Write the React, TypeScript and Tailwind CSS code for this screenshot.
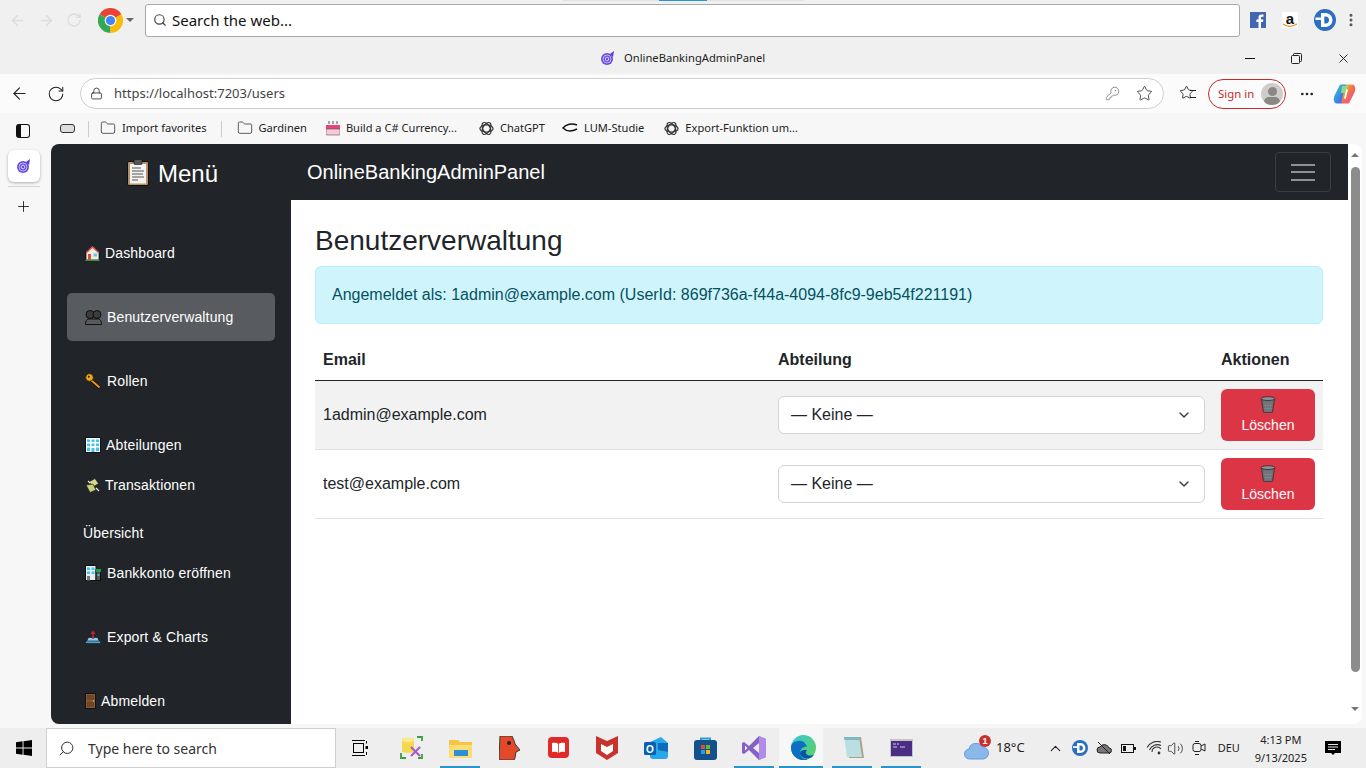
import {
  ArrowLeft, ArrowRight, RotateCw, Search, Lock, KeyRound, Star, Ellipsis, X, Plus, ChevronDown, ChevronUp,
  Folder, Volume2, EllipsisVertical,
} from 'lucide-react'

const uiFont = "font-['Noto_Sans',sans-serif]"
const pageFont = "font-['Liberation_Sans',Arial,sans-serif]"

// ===== Small drawings
function ChromeLogo() {
  return (
    <svg width="25" height="25" viewBox="0 0 24 24">
      <path d="M12 12L1.6 6A12 12 0 0 1 22.4 6Z" fill="#ea4335" />
      <path d="M12 12L1.6 6A12 12 0 0 0 12 24Z" fill="#34a853" />
      <path d="M12 12L22.4 6A12 12 0 0 1 12 24Z" fill="#fbbc04" />
      <circle cx="12" cy="12" r="5.6" fill="#fff" />
      <circle cx="12" cy="12" r="4.4" fill="#4285f4" />
    </svg>
  )
}

function SwirlIcon({ size = 16 }: { size?: number }) {
  return (
    <svg width={size} height={size} viewBox="0 0 16 16" fill="none">
      <circle cx="7" cy="9" r="6" fill="#6a4de0" />
      <path d="M10 4l4-3-1 6z" fill="#5a3ad6" />
      <circle cx="7" cy="9" r="4" stroke="#c9bdf7" strokeWidth="0.9" />
      <circle cx="7" cy="9" r="1.8" stroke="#e4defb" strokeWidth="0.9" />
    </svg>
  )
}

function DIcon({ size = 22 }: { size?: number }) {
  return (
    <svg width={size} height={size} viewBox="0 0 22 22">
      <circle cx="11" cy="11" r="11" fill="#2a6fc0" />
      <path d="M7 4h4.500a7 7 0 0 1 0 14H7V11H1.500V8.500H7z" fill="#fff" />
      <path d="M10.300 7.500h1.200a3.500 3.500 0 0 1 0 7h-1.200z" fill="#2a6fc0" />
    </svg>
  )
}

function OpenAiIcon() {
  return (
    <svg width="15" height="15" viewBox="0 0 15 15" fill="none" stroke="#333" strokeWidth="1.2">
      <ellipse cx="7.5" cy="7.5" rx="6.6" ry="3.6" />
      <ellipse cx="7.5" cy="7.5" rx="6.6" ry="3.6" transform="rotate(60 7.5 7.5)" />
      <ellipse cx="7.5" cy="7.5" rx="6.6" ry="3.6" transform="rotate(120 7.5 7.5)" />
    </svg>
  )
}

function Copilot() {
  return (
    <svg width="23" height="22" viewBox="0 0 23 22" strokeLinejoin="round">
      <defs>
        <linearGradient id="cpa" x1="0" y1="0" x2="1" y2="1">
          <stop offset="0" stopColor="#2fd0c8" />
          <stop offset="0.6" stopColor="#3f7de8" />
          <stop offset="1" stopColor="#7a55e0" />
        </linearGradient>
        <linearGradient id="cpb" x1="0" y1="0" x2="1" y2="1">
          <stop offset="0" stopColor="#f5c23a" />
          <stop offset="0.5" stopColor="#f0704c" />
          <stop offset="1" stopColor="#e84fa8" />
        </linearGradient>
      </defs>
      <path d="M8 3h5l-3 14c-.4 1.500-1 2-2 2H4C2 19 2 16 2.500 14z" fill="url(#cpa)" stroke="url(#cpa)" strokeWidth="3" />
      <path d="M15 19h-5l3-14c.4-1.500 1-2 2-2h4c2 0 2 3 1.500 5z" fill="url(#cpb)" stroke="url(#cpb)" strokeWidth="3" />
      <path d="M9 3h6l-2.500 7H8z" fill="#8fdc7c" />
      <path d="M14 7l-2 8" stroke="#fff" strokeWidth="1.800" strokeLinecap="round" />
    </svg>
  )
}

function HouseEmoji() {
  return (
    <svg width="15" height="16" viewBox="0 0 15 16">
      <path d="M7.5 1L1 7v8h13V7z" fill="#f3ece4" stroke="#000" strokeWidth="0.7" />
      <path d="M7.5 1L1 7l1 1 5.5-5 5.5 5 1-1z" fill="#d9534a" />
      <rect x="3" y="9" width="3" height="6" fill="#e2492f" />
      <rect x="8.5" y="8.5" width="3.5" height="3" fill="#5fc4ee" />
      <rect x="0.5" y="14.6" width="14" height="1.2" fill="#3fae3f" />
    </svg>
  )
}
function BustsEmoji() {
  return (
    <svg width="17" height="15" viewBox="0 0 17 15">
      <circle cx="5" cy="4.500" r="4" fill="#3c3c3c" stroke="#000" strokeWidth="0.8" />
      <circle cx="12" cy="4.500" r="4" fill="#3c3c3c" stroke="#000" strokeWidth="0.8" />
      <path d="M0.500 14.500c0-4 1.500-5.500 4-5.500h8c2.500 0 4 1.500 4 5.500z" fill="#5a5a5a" stroke="#000" strokeWidth="0.8" />
    </svg>
  )
}
function KeyEmoji() {
  return (
    <svg width="16" height="16" viewBox="0 0 16 16">
      <path d="M6 7l8.500 7.500" stroke="#000" strokeWidth="3.400" />
      <path d="M6 7l8.500 7.500" stroke="#e49b11" strokeWidth="2" />
      <circle cx="4.500" cy="4.500" r="3.800" fill="#f0a818" stroke="#3a2a05" strokeWidth="0.8" />
      <circle cx="3.800" cy="3.800" r="1" fill="#222" />
    </svg>
  )
}
function OfficeEmoji() {
  return (
    <svg width="16" height="16" viewBox="0 0 16 16">
      <rect x="0.500" y="0.500" width="15" height="15" fill="#fff" stroke="#111" />
      <g fill="#40c4f0">
        <rect x="2" y="2.500" width="3" height="2.500" />
        <rect x="6.500" y="2.500" width="3" height="2.500" />
        <rect x="11" y="2.500" width="3" height="2.500" />
        <rect x="2" y="6.500" width="3" height="2.500" />
        <rect x="6.500" y="6.500" width="3" height="2.500" />
        <rect x="11" y="6.500" width="3" height="2.500" />
        <rect x="2" y="10.500" width="3" height="3.500" />
        <rect x="6.500" y="11" width="3" height="4" />
        <rect x="11" y="10.500" width="3" height="3.500" />
      </g>
    </svg>
  )
}
function MoneyEmoji() {
  return (
    <svg width="15" height="15" viewBox="0 0 15 15">
      <path d="M4 4l6-3.500 3.500 5L8 9z" fill="#d9d98c" stroke="#222" strokeWidth="0.7" />
      <path d="M1 7l7-1 3 6-6 2.500z" fill="#c7cf75" stroke="#222" strokeWidth="0.7" />
      <path d="M3 3l2 2M11 10l3 3" stroke="#eee" strokeWidth="1.200" />
    </svg>
  )
}
function BankEmoji() {
  return (
    <svg width="16" height="16" viewBox="0 0 16 16">
      <rect x="0.500" y="0.500" width="10.500" height="15" fill="#e8eef0" stroke="#111" />
      <rect x="11" y="5" width="4.500" height="10.500" fill="#555" stroke="#111" />
      <rect x="11" y="4" width="5" height="3" fill="#18a34a" />
      <g fill="#40c4f0">
        <rect x="2" y="2.500" width="3" height="2.500" />
        <rect x="6.500" y="2.500" width="3" height="2.500" />
        <rect x="2" y="6.500" width="3" height="2.500" />
        <rect x="6.500" y="6.500" width="3" height="2.500" />
      </g>
      <rect x="2" y="11" width="3" height="4.500" fill="#777" />
      <rect x="12.500" y="9" width="2" height="2" fill="#40c4f0" />
    </svg>
  )
}
function UploadEmoji() {
  return (
    <svg width="16" height="14" viewBox="0 0 16 14">
      <path d="M0.500 13.500l3-6h9l3 6z" fill="#8fcdf0" stroke="#111" strokeWidth="0.6" />
      <rect x="0.500" y="11" width="15" height="2.500" fill="#4a9fd8" stroke="#111" strokeWidth="0.6" />
      <path d="M8 9V3" stroke="#c8222a" strokeWidth="1.500" />
      <path d="M5.500 4L8 0.500 10.500 4z" fill="#c8222a" />
    </svg>
  )
}
function DoorEmoji() {
  return (
    <svg width="11" height="16" viewBox="0 0 11 16">
      <rect x="0.500" y="0.500" width="10" height="15" fill="#8a5a34" stroke="#111" />
      <rect x="2" y="2" width="7" height="5" fill="#6e4526" />
      <rect x="2" y="8.500" width="7" height="5.500" fill="#6e4526" />
      <circle cx="8.500" cy="8" r="0.700" fill="#e5c25a" />
    </svg>
  )
}
function TrashEmoji() {
  return (
    <svg width="16" height="17" viewBox="0 0 16 17">
      <path d="M1.500 3h13l-1.800 12.500c-.1.800-.6 1.200-1.200 1.200h-7c-.6 0-1.100-.4-1.200-1.200z" fill="#6b7076" stroke="#222" strokeWidth="0.7" />
      <ellipse cx="8" cy="2.600" rx="7" ry="1.900" fill="#8b9096" stroke="#222" strokeWidth="0.7" />
      <path d="M5 6l1 9M8 6v9M11 6l-1 9M3.500 9.500h9M4 12.500h8" stroke="#8b9096" strokeWidth="0.5" />
    </svg>
  )
}
function ClipboardEmoji() {
  return (
    <svg width="22" height="27" viewBox="0 0 22 27">
      <rect x="0.500" y="2.500" width="21" height="24" rx="1.500" fill="#b98f6a" stroke="#111" />
      <rect x="3" y="5" width="16" height="19.500" fill="#f4f4f2" />
      <rect x="7" y="0.500" width="8" height="5" rx="1" fill="#555" stroke="#111" strokeWidth="0.6" />
      <path d="M5 9h9M5 12h12M5 15h11M5 18h12M5 21h6" stroke="#555" strokeWidth="1" />
    </svg>
  )
}

// ===== Taskbar drawings
function TaskView() {
  return (
    <svg width="16" height="16" viewBox="0 0 16 16" fill="none" stroke="#000">
      <rect x="1.500" y="3.500" width="10" height="9" />
      <path d="M0 0.500h13M0 15.500h13" />
      <rect x="13.500" y="6" width="2.500" height="3" fill="#000" stroke="none" />
      <path d="M14.500 1v2.500M14.500 12v3" />
    </svg>
  )
}
function DbTool() {
  return (
    <svg width="23" height="23" viewBox="0 0 23 23" fill="none">
      <path d="M17 1h5v4M1 17v5h5M22 18v4h-4" stroke="#3f9d3f" strokeWidth="1.800" />
      <path d="M2 4c0-3 12-3 12 0v11c0 2.500-12 2.500-12 0z" fill="#f4d94e" />
      <ellipse cx="8" cy="4" rx="6" ry="2.200" fill="#f9e98c" />
      <path d="M11 11l9 9M20 11l-9 9" stroke="#a65cc9" strokeWidth="2.200" />
    </svg>
  )
}
function Explorer() {
  return (
    <svg width="23" height="20" viewBox="0 0 23 20">
      <path d="M0 2h9l2 2h12v15H0z" fill="#f6c544" />
      <rect x="0" y="7" width="23" height="13" fill="#fcdc74" />
      <rect x="5" y="12" width="14" height="6" fill="#2f8fd6" />
    </svg>
  )
}
function RedHead() {
  return (
    <svg width="21" height="24" viewBox="0 0 21 24">
      <path d="M1 0h12c2 4 3 7 3 8l5 6-4 2-1 6-1 2H2L0 23z" fill="#e2492a" stroke="#3a3a3a" strokeWidth="1" />
      <circle cx="10" cy="7" r="2" fill="#222" />
    </svg>
  )
}
function RedBook() {
  return (
    <svg width="21" height="21" viewBox="0 0 21 21">
      <rect width="21" height="21" rx="4" fill="#e02a2a" />
      <path d="M10.500 7c-2-1.500-4-1.500-6.500-1v9c2.500-.5 4.500-.5 6.500 1 2-1.500 4-1.500 6.500-1V6c-2.500-.5-4.500-.5-6.500 1z" fill="#fff" />
      <path d="M10.500 7v9" stroke="#e02a2a" strokeWidth="0.800" />
    </svg>
  )
}
function McAfee() {
  return (
    <svg width="22" height="24" viewBox="0 0 22 24">
      <path d="M0 0l11 5 11-5v17l-11 7-11-7z" fill="#c8332e" />
      <path d="M5 8l6 3 6-3v7l-6 4-6-4z" fill="#fff" />
    </svg>
  )
}
function Outlook() {
  return (
    <svg width="24" height="22" viewBox="0 0 24 22">
      <path d="M6 5l11-5 7 6v13a3 3 0 0 1-3 3H9a3 3 0 0 1-3-3z" fill="#28a8ea" />
      <path d="M14 6l10 0v9l-10-2z" fill="#0f6cbd" />
      <rect x="0" y="5" width="12" height="13" rx="1.500" fill="#0a5fb0" />
      <text x="6" y="15.500" textAnchor="middle" fill="#fff" fontSize="10" fontWeight="700" fontFamily="Liberation Sans">O</text>
    </svg>
  )
}
function StoreBag() {
  return (
    <svg width="23" height="24" viewBox="0 0 23 24" fill="none">
      <path d="M7 5V2.500h9V5" stroke="#2a9fd6" strokeWidth="2" />
      <rect y="4" width="23" height="20" rx="3" fill="#14508c" />
      <rect x="7" y="9" width="4" height="4" fill="#e8492a" />
      <rect x="12" y="9" width="4" height="4" fill="#6ab82e" />
      <rect x="7" y="14" width="4" height="4" fill="#1f9fe8" />
      <rect x="12" y="14" width="4" height="4" fill="#f7b51a" />
    </svg>
  )
}
function VsIcon() {
  return (
    <svg width="24" height="24" viewBox="0 0 24 24">
      <path d="M17 0l7 3v18l-7 3-10-10-5 4-2-1V7l2-1 5 4z" fill="#8661c5" />
      <path d="M17 0l7 3v18l-7 3z" fill="#b18be8" />
      <path d="M17 7l-6 5 6 5zM3 9.500v5l2.500-2.500z" fill="#ececec" />
    </svg>
  )
}
function EdgeIcon() {
  return (
    <svg width="25" height="25" viewBox="0 0 25 25">
      <defs>
        <linearGradient id="edg" x1="0" y1="0" x2="1" y2="1">
          <stop offset="0" stopColor="#36c6d8" />
          <stop offset="1" stopColor="#5fd35a" />
        </linearGradient>
      </defs>
      <circle cx="12.500" cy="12.500" r="12.500" fill="url(#edg)" />
      <path d="M0 12.500A12.500 12.500 0 0 0 18 24c-5 1-9-2-9-6 0-4 4-7 7-6-1-4-5-7-9-6C3 6 0 9 0 12.500z" fill="#0d6fc4" />
      <path d="M9 18c0 3 3 5.500 7 5.500 4 0 6-2 7-4-3 2-7 1-8-1-.5-1 0-2 1-3-3-1-7 0-7 2.500z" fill="#0a54a8" />
    </svg>
  )
}
function Notepad() {
  return (
    <svg width="23" height="24" viewBox="0 0 23 24">
      <path d="M5 1h15l3 21H8z" fill="#a9a28a" />
      <path d="M3 1h15l3 20H6z" fill="#b9dfe3" />
      <path d="M3 1h15l.5 3H3.500z" fill="#7fb8c4" />
    </svg>
  )
}
function Terminal() {
  return (
    <svg width="23" height="18" viewBox="0 0 23 18">
      <rect width="23" height="18" fill="#c5c5c5" />
      <rect x="1" y="2" width="21" height="15" fill="#4b2e83" />
      <path d="M3 5h3M7 5h2M3 8h4M10 8h5" stroke="#cfc6e8" strokeWidth="1" />
    </svg>
  )
}
function CloudBadge() {
  return (
    <div className="relative h-[24px] w-[26px]">
      <svg width="25" height="19" viewBox="0 0 25 19" className="absolute bottom-0 left-0">
        <path d="M6 18a5 5 0 0 1-1-10 7 7 0 0 1 13-2 6 6 0 0 1 1 12z" fill="#8ab8ea" stroke="#6a9ad8" />
      </svg>
      <div className={`absolute right-[-1px] top-[-1px] flex h-[12px] w-[12px] items-center justify-center rounded-full bg-[#c9302c] text-[9px] font-bold leading-none text-white ${pageFont}`}>1</div>
    </div>
  )
}

// ===== Browser chrome
function TopBar() {
  return (
    <div className="relative flex h-[37px] shrink-0 items-center bg-[#f0f0f0] pt-[3px]">
      <div className="absolute left-[563px] top-0 h-px w-[241px] bg-[#e2e2e2]" />
      <div className="absolute left-[659px] top-0 h-px w-[48px] bg-[#2a93d6]" />
      <ArrowLeft size={17} className="ml-[9px] text-[#dcdcdc]" strokeWidth={2} />
      <ArrowRight size={17} className="ml-[12px] text-[#dcdcdc]" strokeWidth={2} />
      <RotateCw size={16} className="ml-[11px] text-[#dcdcdc]" strokeWidth={2} />
      <div className="ml-[16px]"><ChromeLogo /></div>
      <div className="ml-[3px] h-0 w-0 border-x-[4px] border-t-[4px] border-x-transparent border-t-[#666]" />
      <div className="ml-[11px] flex h-[33px] w-[1095px] items-center rounded-[3px] border border-[#a8a8a8] bg-white pl-[7px]">
        <Search size={14} className="text-[#444]" strokeWidth={2} />
        <span className={`ml-[5px] text-[15px] text-[#111] ${uiFont}`}>Search the web...</span>
      </div>
      <svg width="16" height="16" viewBox="0 0 16 16" className="ml-[10px]">
        <rect width="16" height="16" fill="#4267b2" />
        <path d="M11 16V10h2l.4-2.500H11V6c0-.8.3-1.200 1.200-1.200h1.300V2.600C13 2.500 12.300 2.500 11.600 2.500 9.600 2.500 8.500 3.700 8.500 5.700v1.800H6.400V10h2.100v6z" fill="#fff" />
      </svg>
      <div className="relative ml-[16px] flex h-[16px] w-[16px] items-start justify-center bg-white">
        <span className={`text-[15px] font-bold leading-[13px] text-[#111] ${pageFont}`}>a</span>
        <svg width="16" height="5" viewBox="0 0 16 5" className="absolute bottom-0 left-0">
          <path d="M1 1c4 3 9 3 14 0" stroke="#f08c1e" strokeWidth="1.200" fill="none" />
        </svg>
      </div>
      <div className="ml-[16px]"><DIcon /></div>
      <EllipsisVertical size={16} className="ml-[7px] text-[#555]" strokeWidth={2.500} />
    </div>
  )
}

function TitleBar() {
  return (
    <div className="relative flex h-[37px] shrink-0 items-center bg-[#f0f0f0] pt-[5px]">
      <div className="ml-[600px]"><SwirlIcon /></div>
      <span className={`ml-[8px] text-[11.2px] text-[#222] ${uiFont}`}>OnlineBankingAdminPanel</span>
      <div className="ml-auto flex items-center pr-[15px]">
        <div className="h-px w-[10px] bg-[#111]" />
        <svg width="11" height="11" viewBox="0 0 11 11" fill="none" stroke="#222" className="ml-[36px]">
          <rect x="0.500" y="2.500" width="8" height="8" rx="1" />
          <path d="M2.500 2.500V1.500a1 1 0 0 1 1-1h6a1 1 0 0 1 1 1v6a1 1 0 0 1-1 1h-1" />
        </svg>
        <X size={15} className="ml-[34px] text-[#111]" strokeWidth={1.400} />
      </div>
    </div>
  )
}

function AddressBar() {
  return (
    <div className="flex h-[39px] shrink-0 items-center bg-[#fbfbfb] pb-[4px] pt-[4px]">
      <ArrowLeft size={19} className="ml-[10px] text-[#222]" strokeWidth={1.400} />
      <RotateCw size={18} className="ml-[18px] text-[#222]" strokeWidth={1.400} />
      <div className="ml-[15px] flex h-[31px] w-[1084px] items-center rounded-full border border-[#cfcfcf] bg-white pl-[9px] pr-[10px]">
        <Lock size={13} className="text-[#333]" strokeWidth={1.600} />
        <span className={`ml-[11px] pt-px text-[13px] text-[#444] ${uiFont}`}>https://localhost:7203/users</span>
        <KeyRound size={15} className="ml-auto text-[#777]" strokeWidth={1.300} />
        <Star size={17} className="ml-[16px] text-[#333]" strokeWidth={1.200} />
      </div>
      <div className="relative ml-[15px] h-[17px] w-[17px]">
        <Star size={15} className="text-[#222]" strokeWidth={1.400} />
        <div className="absolute right-0 top-[5px] h-[8px] w-[6px] border-y border-[#222]" />
      </div>
      <div className="ml-[12px] flex h-[30px] w-[78px] items-center rounded-full border-[1.500px] border-[#c42b2b] pl-[9px]">
        <span className={`text-[11.4px] text-[#c42b2b] ${uiFont}`}>Sign in</span>
        <div className="relative ml-[7px] h-[22px] w-[22px] overflow-hidden rounded-full bg-[#cfcdc9]">
          <div className="mx-auto mt-[4px] h-[9px] w-[9px] rounded-full bg-[#8a8886]" />
          <div className="mx-auto mt-[1px] h-[10px] w-[16px] rounded-full bg-[#8a8886]" />
        </div>
      </div>
      <Ellipsis size={16} className="ml-[13px] text-[#222]" />
      <div className="ml-[18px]"><Copilot /></div>
    </div>
  )
}

function Bookmark({ icon, label, className }: { icon: React.ReactNode; label: string; className: string }) {
  return (
    <div className={`flex items-center ${className}`}>
      {icon}
      <span className={`ml-[6px] whitespace-nowrap text-[11.1px] text-[#222] ${uiFont}`}>{label}</span>
    </div>
  )
}

function BookmarksBar() {
  return (
    <div className="flex h-[31px] shrink-0 items-center bg-[#f7f7f7]">
      <div className="ml-[16px] mt-[5px] h-[14px] w-[14px] rounded-[3px] border-[1.500px] border-[#111] border-l-[5px]" />
      <div className="ml-[30px] h-[9px] w-[15px] rounded-[3px] border-[1.500px] border-[#333] bg-[#ddd]" />
      <div className="ml-[13px] h-[16px] w-px bg-[#ccc]" />
      <Bookmark
        className="ml-[11px]"
        label="Import favorites"
        icon={<Folder size={16} className="text-[#333]" strokeWidth={1.200} />}
      />
      <div className="ml-[14px] h-[16px] w-px bg-[#ccc]" />
      <Bookmark
        className="ml-[15px]"
        label="Gardinen"
        icon={<Folder size={16} className="text-[#333]" strokeWidth={1.200} />}
      />
      <Bookmark
        className="ml-[19px]"
        label="Build a C# Currency..."
        icon={
          <svg width="14" height="15" viewBox="0 0 14 15">
            <path d="M3 0v3M7 0v3M11 0v3" stroke="#555" />
            <rect y="4" width="14" height="4" fill="#e8447c" />
            <rect y="8" width="14" height="6" rx="1" fill="#f7c9d9" stroke="#555" strokeWidth="0.6" />
          </svg>
        }
      />
      <Bookmark className="ml-[22px]" label="ChatGPT" icon={<OpenAiIcon />} />
      <Bookmark
        className="ml-[17px]"
        label="LUM-Studie"
        icon={
          <svg width="16" height="10" viewBox="0 0 16 10" fill="none" stroke="#111" strokeWidth="1.400">
            <path d="M15 2C10 0 4 1 1 5c3 3 8 4 14 1" />
          </svg>
        }
      />
      <Bookmark className="ml-[20px]" label="Export-Funktion um..." icon={<OpenAiIcon />} />
    </div>
  )
}

function LeftRail() {
  return (
    <div className="flex w-[51px] shrink-0 flex-col items-start bg-[#f7f7f7] pl-[8px] pt-[6px]">
      <div className="flex h-[32px] w-[32px] items-center justify-center rounded-[6px] bg-white shadow-[0_1px_3px_rgba(0,0,0,0.3)]">
        <SwirlIcon />
      </div>
      <div className="mt-[4px] h-px w-[32px] bg-[#d5d5d5]" />
      <Plus size={17} className="ml-[7px] mt-[11px] text-[#111]" strokeWidth={1.200} />
    </div>
  )
}

// ===== Page
const navRows: { icon?: React.ReactNode; label: string; className: string; iconGap?: string; active?: boolean }[] = [
  { icon: <HouseEmoji />, label: 'Dashboard', className: 'mt-[29px] h-[48px] pl-[18px]', iconGap: 'ml-[5px]' },
  { icon: <BustsEmoji />, label: 'Benutzerverwaltung', className: 'mt-4 h-[48px] pl-[18px]', iconGap: 'ml-[5px]', active: true },
  { icon: <KeyEmoji />, label: 'Rollen', className: 'mt-4 h-[48px] pl-[18px]', iconGap: 'ml-[6px]' },
  { icon: <OfficeEmoji />, label: 'Abteilungen', className: 'mt-4 h-[48px] pl-[18px]', iconGap: 'ml-[5px]' },
  { icon: <MoneyEmoji />, label: 'Transaktionen', className: 'h-[32px] pl-[18px]', iconGap: 'ml-[5px]' },
  { label: 'Übersicht', className: 'mt-4 h-[32px] pl-[16px]' },
  { icon: <BankEmoji />, label: 'Bankkonto eröffnen', className: 'h-[48px] pl-[18px]', iconGap: 'ml-[6px]' },
  { icon: <UploadEmoji />, label: 'Export & Charts', className: 'mt-4 h-[48px] pl-[18px]', iconGap: 'ml-[6px]' },
  { icon: <DoorEmoji />, label: 'Abmelden', className: 'mt-4 h-[48px] pl-[18px]', iconGap: 'ml-[5px]' },
]

function Sidebar() {
  return (
    <div className={`flex h-full w-[240px] shrink-0 flex-col overflow-hidden bg-[#212529] text-white ${pageFont}`}>
      <div className="flex h-[56px] shrink-0 items-center pl-[76px]">
        <ClipboardEmoji />
        <span className="ml-[9px] pt-[3px] text-[24px]">Menü</span>
      </div>
      <div className="flex flex-col px-[16px]">
        {navRows.map((r) => (
          <div
            key={r.label}
            className={`flex shrink-0 items-center rounded-[5px] text-[14px] tracking-[0.15px] ${r.className} ${r.active ? 'bg-[#585c60]' : ''}`}
          >
            {r.icon}
            <span className={r.iconGap}>{r.label}</span>
          </div>
        ))}
      </div>
    </div>
  )
}

function UserRow({ email, striped }: { email: string; striped?: boolean }) {
  return (
    <tr className={`h-[69px] border-b border-[#dee2e6] ${striped ? 'bg-[#f2f2f2]' : 'bg-white'}`}>
      <td className="px-2">{email}</td>
      <td className="px-2">
        <div className="flex h-[38px] items-center justify-between rounded-[6px] border border-[#ced4da] bg-white pl-3 pr-[12px]">
          <span>— Keine —</span>
          <ChevronDown size={16} className="text-[#343a40]" strokeWidth={2} />
        </div>
      </td>
      <td className="px-2">
        <button className="flex h-[52px] w-[94px] flex-col items-center justify-center rounded-[6px] bg-[#dc3545] text-[14px] text-white">
          <TrashEmoji />
          <span className="mt-[3px] leading-[18px]">Löschen</span>
        </button>
      </td>
    </tr>
  )
}

function MainPanel() {
  return (
    <div className={`flex h-full min-w-0 flex-1 flex-col bg-white text-[#212529] ${pageFont}`}>
      <div className="flex h-[56px] shrink-0 items-center justify-between bg-[#212529] pl-[16px] pr-[17px] text-white">
        <span className="text-[20px]">OnlineBankingAdminPanel</span>
        <div className="flex h-[40px] w-[56px] flex-col items-center justify-center gap-[5.500px] rounded-[4px] border border-[#3a3e42]">
          <div className="h-[2px] w-[24px] bg-[#8f9194]" />
          <div className="h-[2px] w-[24px] bg-[#8f9194]" />
          <div className="h-[2px] w-[24px] bg-[#8f9194]" />
        </div>
      </div>
      <div className="pl-[24px] pr-[25px] pt-[24px]">
        <h1 className="text-[28px] leading-[34px]">Benutzerverwaltung</h1>
        <div className="mt-[8px] flex h-[58px] items-center rounded-[6px] border border-[#b6effb] bg-[#cff4fc] px-[16px] text-[#055160]">
          Angemeldet als: 1admin@example.com (UserId: 869f736a-f44a-4094-8fc9-9eb54f221191)
        </div>
        <table className="mt-[16px] w-full table-fixed border-collapse text-[16px]">
          <colgroup>
            <col className="w-[455px]" />
            <col className="w-[443px]" />
            <col />
          </colgroup>
          <thead>
            <tr className="h-[40px] border-b border-[#212529] text-left">
              <th className="px-2 font-bold">Email</th>
              <th className="px-2 font-bold">Abteilung</th>
              <th className="px-2 font-bold">Aktionen</th>
            </tr>
          </thead>
          <tbody>
            <UserRow email="1admin@example.com" striped />
            <UserRow email="test@example.com" />
          </tbody>
        </table>
      </div>
    </div>
  )
}

function Scrollbar() {
  return (
    <div className="flex w-[14px] shrink-0 flex-col items-center rounded-tr-[8px] bg-white pt-[9px]">
      <div className="h-0 w-0 border-x-[4px] border-b-[4px] border-x-transparent border-b-[#777]" />
      <div className="mt-[10px] h-[505px] w-[9px] rounded-full bg-[#8c8c8c]" />
      <div className="mt-[35px] h-0 w-0 border-x-[4px] border-t-[4px] border-x-transparent border-t-[#777]" />
    </div>
  )
}

function TaskSlot({ children, running, active, className }: { children: React.ReactNode; running?: boolean; active?: boolean; className?: string }) {
  return (
    <div className={`flex h-[40px] items-center justify-center border-b-[2px] pt-[1px] ${running ? 'border-[#2a93c9]' : 'border-transparent'} ${active ? 'bg-[#f7f7f7]' : ''} ${className ?? 'w-[40px]'}`}>
      {children}
    </div>
  )
}

function Taskbar() {
  return (
    <div className={`flex h-[40px] shrink-0 items-center bg-[#eeeeee] ${uiFont}`}>
      <svg width="16" height="16" viewBox="0 0 16 16" className="ml-[16px]">
        <path d="M0 2.300l6.600-1v6.300H0zM7.500 1.200L16 0v7.600H7.500zM0 8.400h6.600v6.300l-6.600-1zM7.500 8.400H16V16l-8.500-1.200z" fill="#000" />
      </svg>
      <div className="ml-[14px] flex h-[40px] w-[290px] items-center border border-[#cfcfcf] bg-white pl-[11px]">
        <Search size={17} className="scale-x-[-1] text-[#333]" strokeWidth={1.400} />
        <span className="ml-[13px] text-[14px] text-[#333]">Type here to search</span>
      </div>
      <TaskSlot className="w-[48px]"><TaskView /></TaskSlot>
      <div className="ml-[7px] flex gap-[9px]">
        <TaskSlot><DbTool /></TaskSlot>
        <TaskSlot running><Explorer /></TaskSlot>
        <TaskSlot><RedHead /></TaskSlot>
        <TaskSlot><RedBook /></TaskSlot>
        <TaskSlot><McAfee /></TaskSlot>
        <TaskSlot><Outlook /></TaskSlot>
        <TaskSlot><StoreBag /></TaskSlot>
        <TaskSlot running><VsIcon /></TaskSlot>
        <TaskSlot running active className="ml-[-4px] w-[44px] pl-[4px]"><EdgeIcon /></TaskSlot>
        <TaskSlot running><Notepad /></TaskSlot>
        <TaskSlot running><Terminal /></TaskSlot>
      </div>
      <div className="ml-[43px]"><CloudBadge /></div>
      <span className="ml-[6px] text-[13px] text-[#222]">18°C</span>
      <ChevronUp size={17} className="ml-[22px] text-[#222]" strokeWidth={1.500} />
      <div className="ml-[8px]"><DIcon size={16} /></div>
      <svg width="16" height="14" viewBox="0 0 16 14" className="ml-[8px]" fill="#777" stroke="#222">
        <path d="M4 12a3 3 0 0 1 0-6 5 5 0 0 1 9 1 2.500 2.500 0 0 1 0 5z" />
        <path d="M2 1l12 12" />
      </svg>
      <svg width="15" height="9" viewBox="0 0 15 9" className="ml-[9px]" fill="none" stroke="#111">
        <rect x="0.500" y="0.500" width="12" height="8" />
        <rect x="2" y="2" width="3" height="5" fill="#111" stroke="none" />
        <rect x="13" y="3" width="2" height="3" fill="#111" stroke="none" />
      </svg>
      <svg width="16" height="14" viewBox="0 0 16 14" className="ml-[10px]" fill="none" stroke="#333" strokeWidth="1.100">
        <path d="M1 6.500A12 12 0 0 1 15 1M3.500 9A8.500 8.500 0 0 1 15 4.500M6 11a5 5 0 0 1 9-3" />
        <circle cx="13" cy="12" r="1.400" fill="#333" stroke="none" />
      </svg>
      <Volume2 size={17} className="ml-[5px] text-[#333]" strokeWidth={1.200} />
      <svg width="14" height="16" viewBox="0 0 14 16" className="ml-[8px]" fill="none" stroke="#222">
        <rect x="1" y="3.500" width="8" height="8" rx="2" />
        <path d="M9 6l4-2v7l-4-2M3 1.500h4M3 14.500h4" />
      </svg>
      <span className="ml-[12px] text-[11px] text-[#222]">DEU</span>
      <div className="ml-[9px] flex w-[64px] flex-col items-center pt-px text-[11px] leading-[18px] text-[#222]">
        <span>4:13 PM</span>
        <span>9/13/2025</span>
      </div>
      <svg width="16" height="16" viewBox="0 0 16 16" className="ml-[12px]">
        <path d="M0 1h16v12h-6l-2 2-2-2H0z" fill="#000" />
        <path d="M3 4.500h10M3 7h10M3 9.500h7" stroke="#fff" strokeWidth="0.900" />
      </svg>
    </div>
  )
}

export default function App() {
  return (
    <div className="flex h-[768px] w-[1366px] flex-col overflow-hidden bg-[#f7f7f7]">
      <TopBar />
      <TitleBar />
      <AddressBar />
      <BookmarksBar />
      <div className="flex h-[580px] shrink-0">
        <LeftRail />
        <div className="flex h-full w-[1311px] overflow-hidden rounded-[8px]">
          <Sidebar />
          <MainPanel />
          <Scrollbar />
        </div>
      </div>
      <div className="h-[4px] shrink-0 bg-[#f7f7f7]" />
      <Taskbar />
    </div>
  )
}
